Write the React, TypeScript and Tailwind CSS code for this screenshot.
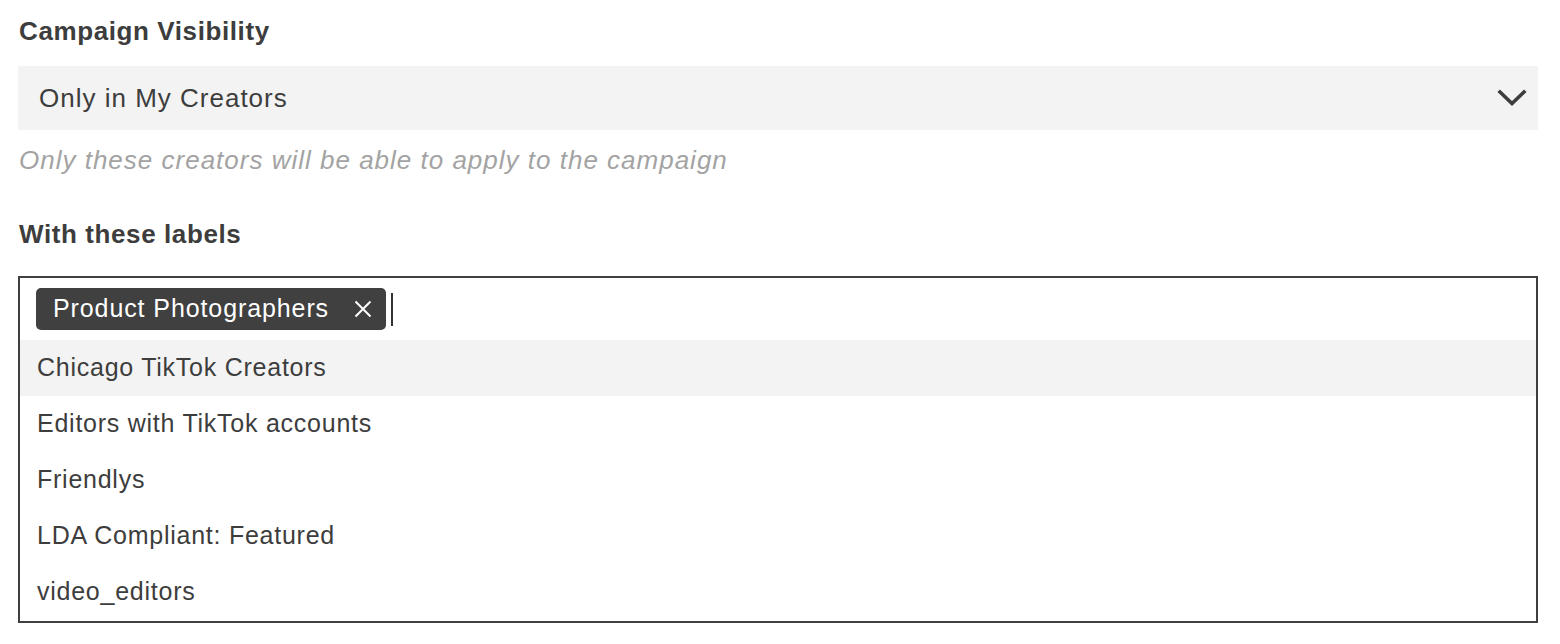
const labels = [
  'Chicago TikTok Creators',
  'Editors with TikTok accounts',
  'Friendlys',
  'LDA Compliant: Featured',
  'video_editors',
];

export default function App() {
  return (
    <div className="w-[1560px] h-[644px] bg-white pl-[18px] pr-[22px] pt-[14px] text-[#3d3d3d] font-['Liberation_Sans',sans-serif]">
      {/* Visibility select */}
      <h3 className="text-[26px] font-bold leading-[34px] tracking-[0.6px] pl-px">Campaign Visibility</h3>
      <div className="mt-[18px] h-16 bg-[#f3f3f3] flex items-center justify-between pl-[21px] pr-[11px]">
        <span className="text-[26px] tracking-[1px]">Only in My Creators</span>
        <svg width="30" height="20" viewBox="0 0 30 20" fill="none" stroke="#3d3d3d" strokeWidth={3.6} strokeLinecap="square">
          <path d="M3 4l12 11.5L27 4" />
        </svg>
      </div>
      <p className="mt-[14px] text-[26px] italic text-[#a3a3a3] leading-8 tracking-[1px] pl-px">
        Only these creators will be able to apply to the campaign
      </p>

      {/* Labels multiselect */}
      <h3 className="mt-[41px] text-[26px] font-bold leading-[34px] tracking-[0.6px] pl-px">With these labels</h3>
      <div className="mt-[25px] border-2 border-[#404040] h-[347px]">
        <div className="flex items-start h-[62px] pl-4 pt-[10px]">
          <span className="flex items-center h-[42px] rounded-[5px] bg-[#404040] text-white text-[25px] tracking-[0.9px] pl-[17px] pr-[14px]">
            Product Photographers
            <svg width="18" height="18" viewBox="0 0 18 18" fill="none" stroke="white" strokeWidth={2} className="ml-[25px]">
              <path d="M1.5 1.5l15 15M16.5 1.5l-15 15" />
            </svg>
          </span>
          <span className="ml-[5px] mt-[5px] w-[2px] h-[33px] bg-[#333]" />
        </div>
        <ul>
          {labels.map((l, i) => (
            <li
              key={l}
              className={`h-14 flex items-center pl-[17px] text-[25px] tracking-[0.75px] ${i === 0 ? 'bg-[#f3f3f3]' : ''}`}
            >
              {l}
            </li>
          ))}
        </ul>
      </div>
    </div>
  );
}
